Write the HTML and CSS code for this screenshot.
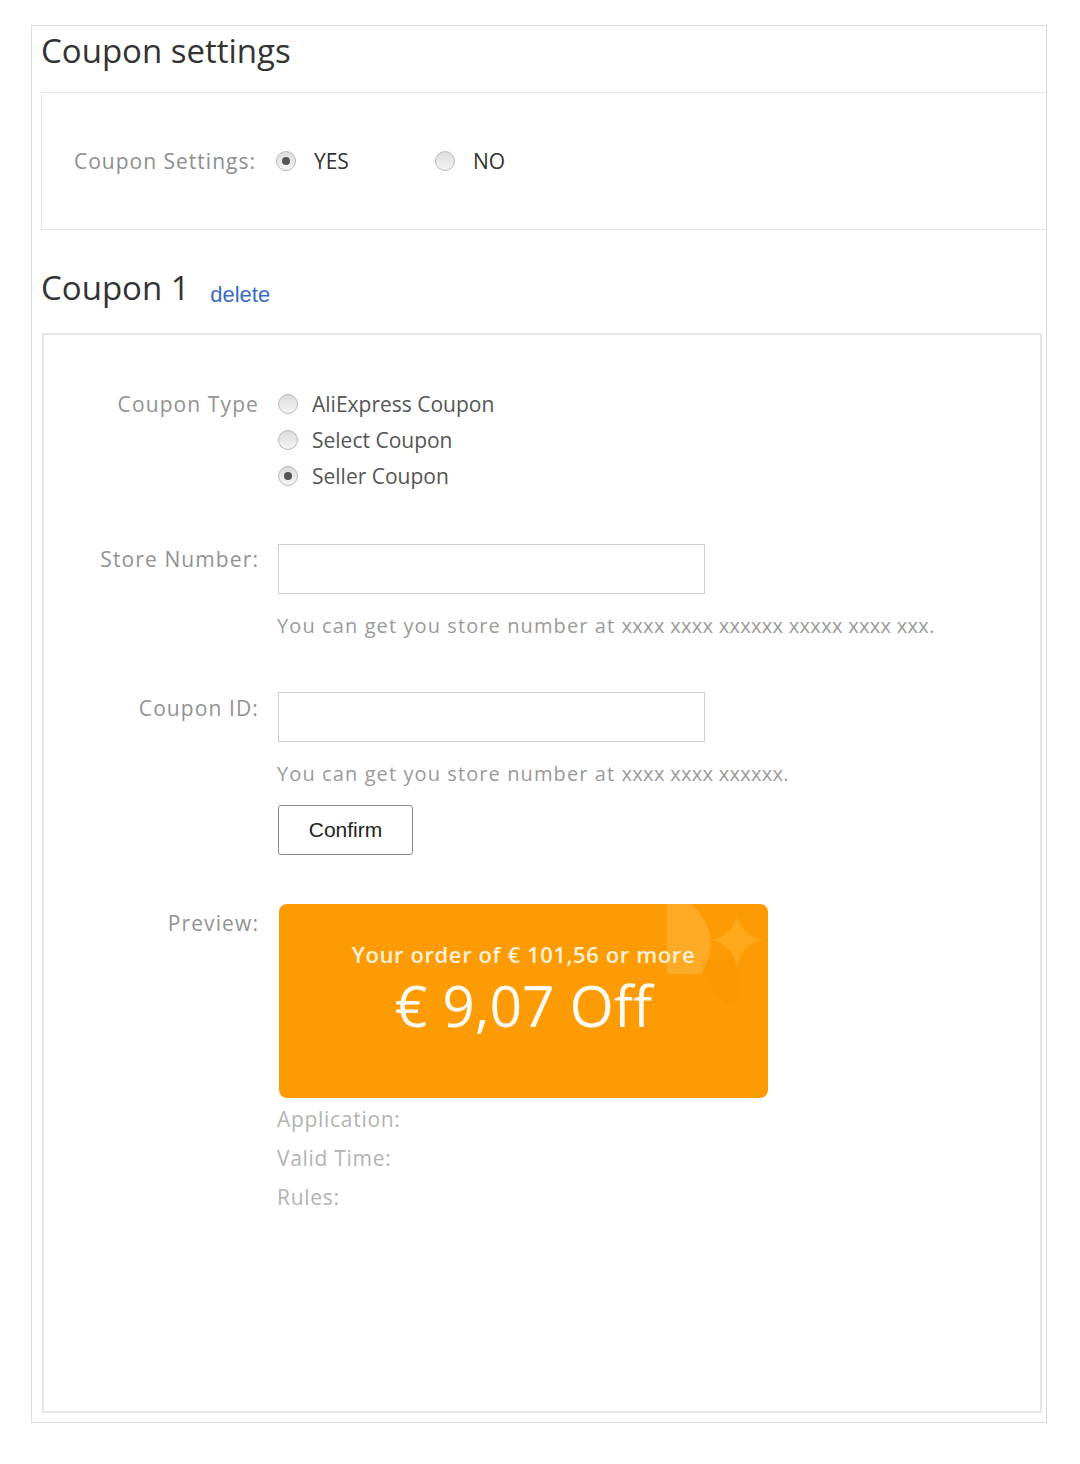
FILE: index.html
```html
<!DOCTYPE html>
<html lang="en">
<head>
<meta charset="utf-8">
<title>Coupon settings</title>
<link rel="stylesheet" href="styles.css">
</head>
<body>
<div class="page">
  <h1 class="title">Coupon settings</h1>
  <div class="settings-box">
    <div class="settings-row">
      <span class="settings-label">Coupon Settings:</span>
      <label class="choice"><span class="radio checked"></span><span class="choice-text">YES</span></label>
      <label class="choice choice-no"><span class="radio"></span><span class="choice-text">NO</span></label>
    </div>
  </div>

  <h2 class="title coupon-title">Coupon 1 <a class="delete" href="#">delete</a></h2>

  <div class="coupon-box">
    <div class="field">
      <div class="label type-label">Coupon Type</div>
      <div class="options">
        <label class="option"><span class="radio"></span><span>AliExpress Coupon</span></label>
        <label class="option"><span class="radio"></span><span>Select Coupon</span></label>
        <label class="option"><span class="radio checked"></span><span>Seller Coupon</span></label>
      </div>
    </div>

    <div class="field field-store">
      <div class="label">Store Number:</div>
      <div class="control">
        <div class="input"></div>
        <div class="hint">You can get you store number at <span class="xs">xxxx xxxx xxxxxx xxxxx xxxx xxx.</span></div>
      </div>
    </div>

    <div class="field field-id">
      <div class="label">Coupon ID:</div>
      <div class="control">
        <div class="input"></div>
        <div class="hint">You can get you store number at <span class="xs">xxxx xxxx xxxxxx.</span></div>
        <button class="confirm" type="button">Confirm</button>
      </div>
    </div>

    <div class="field field-preview">
      <div class="label preview-label">Preview:</div>
      <div class="control">
        <div class="card">
          <svg class="card-deco" width="140" height="110" viewBox="0 0 140 110" aria-hidden="true">
            <path d="M0 0 H24 Q58 32 34 70 H0 Z" fill="#ffe0a0" fill-opacity="0.22"/>
            <path d="M34 56 H70 V102 Q42 98 34 56 Z" fill="#e07800" fill-opacity="0.08"/>
            <path d="M70 10 Q74 32 96 36 Q74 40 70 64 Q66 40 44 36 Q66 32 70 10 Z" fill="#ffbb33" fill-opacity="0.45"/>
          </svg>
          <div class="card-line1">Your order of € 101,56 or more</div>
          <div class="card-line2">€ 9,07 Off</div>
        </div>
        <div class="info">Application:</div>
        <div class="info">Valid Time:</div>
        <div class="info">Rules:</div>
      </div>
    </div>
  </div>
</div>
</body>
</html>
```

FILE: styles.css
```css
* { box-sizing: border-box; }

body {
  margin: 0;
  background: #ffffff;
  font-family: "Open Sans", "Noto Sans", "DejaVu Sans", sans-serif;
  color: #333;
}

.page {
  margin: 25px 0 0 31px;
  width: 1016px;
  border: 1px solid #dcdcdc;
  padding: 0 0 9px 9px;
}

.title {
  margin: 0;
  font-size: 33px;
  line-height: 40px;
  height: 40px;
  font-weight: 400;
  color: #333;
  margin-top: 5px;
  margin-bottom: 21px;
}

.settings-box {
  height: 138px;
  border: 1px solid #e6e6e6;
  border-right: none;
  padding: 53px 0 0 32px;
}

.settings-row {
  display: flex;
  align-items: center;
  height: 30px;
  font-size: 21px;
}

.settings-label {
  color: #8e8e8e;
  letter-spacing: 1px;
  margin-right: 20px;
}

.choice {
  display: flex;
  align-items: center;
  gap: 18px;
  color: #333;
}

.choice-no {
  margin-left: 86px;
}

.radio {
  flex: none;
  width: 20px;
  height: 20px;
  border-radius: 50%;
  border: 1px solid #b9b9b9;
  background: linear-gradient(#dcdcdc, #f4f4f4);
  display: inline-flex;
  align-items: center;
  justify-content: center;
}

.radio.checked::after {
  content: "";
  width: 8px;
  height: 8px;
  border-radius: 50%;
  background: #555;
}

.coupon-title {
  margin-top: 38px;
  margin-bottom: 25px;
}

.delete {
  display: inline-block;
  font-family: "Liberation Sans", Arial, sans-serif;
  font-size: 22px;
  line-height: 22px;
  color: #3a6cc6;
  text-decoration: none;
  margin-left: 12px;
  vertical-align: baseline;
  position: relative;
  top: 2px;
}

.coupon-box {
  margin: 0 4px 0 1px;
  border: 2px solid #e6e6e6;
  padding: 51px 0 194px 0;
}

.field {
  display: flex;
  gap: 19px;
  align-items: flex-start;
}

.label {
  flex: none;
  width: 215px;
  text-align: right;
  font-size: 21px;
  line-height: 30px;
  letter-spacing: 1.1px;
  color: #929292;
}

.type-label {
  line-height: 36px;
}

.options {
  display: flex;
  flex-direction: column;
}

.option {
  display: flex;
  align-items: center;
  gap: 14px;
  height: 36px;
  font-size: 21px;
  color: #555;
}

.field-store { margin-top: 50px; }
.field-id { margin-top: 51px; }
.field-id .label { margin-top: 1px; }
.field-preview { margin-top: 49px; }
.preview-label { padding-top: 4px; }

.control {
  display: flex;
  flex-direction: column;
  align-items: flex-start;
}

.input {
  width: 427px;
  height: 50px;
  border: 1px solid #cfcfcf;
  background: #fff;
}

.hint {
  margin-top: 17px;
  margin-left: -1px;
  font-size: 20px;
  line-height: 30px;
  letter-spacing: 1.1px;
  color: #9a9a9a;
}

.xs {
  letter-spacing: 0.3px;
}

.confirm {
  margin-top: 16px;
  width: 135px;
  height: 50px;
  border: 1px solid #8d8d8d;
  border-radius: 3px;
  background: #fff;
  font-family: "Liberation Sans", Arial, sans-serif;
  font-size: 21px;
  color: #222;
  padding: 0;
}

.card {
  position: relative;
  margin-left: 1px;
  width: 489px;
  height: 194px;
  border-radius: 8px;
  background: #fd9b04;
  overflow: hidden;
  padding-top: 35px;
  text-align: center;
}

.card-deco {
  position: absolute;
  top: 0;
  left: 388px;
}

.card-line1 {
  position: relative;
  font-size: 22px;
  line-height: 30px;
  font-weight: 600;
  letter-spacing: 0.6px;
  color: #fff2d8;
}

.card-line2 {
  position: relative;
  margin-top: 6px;
  font-size: 57px;
  line-height: 60px;
  color: #fffaf0;
}

.info {
  font-size: 21px;
  line-height: 39px;
  letter-spacing: 0.7px;
  color: #b3b3b3;
  margin-left: -1px;
}
.card + .info { margin-top: 2px; }
```
